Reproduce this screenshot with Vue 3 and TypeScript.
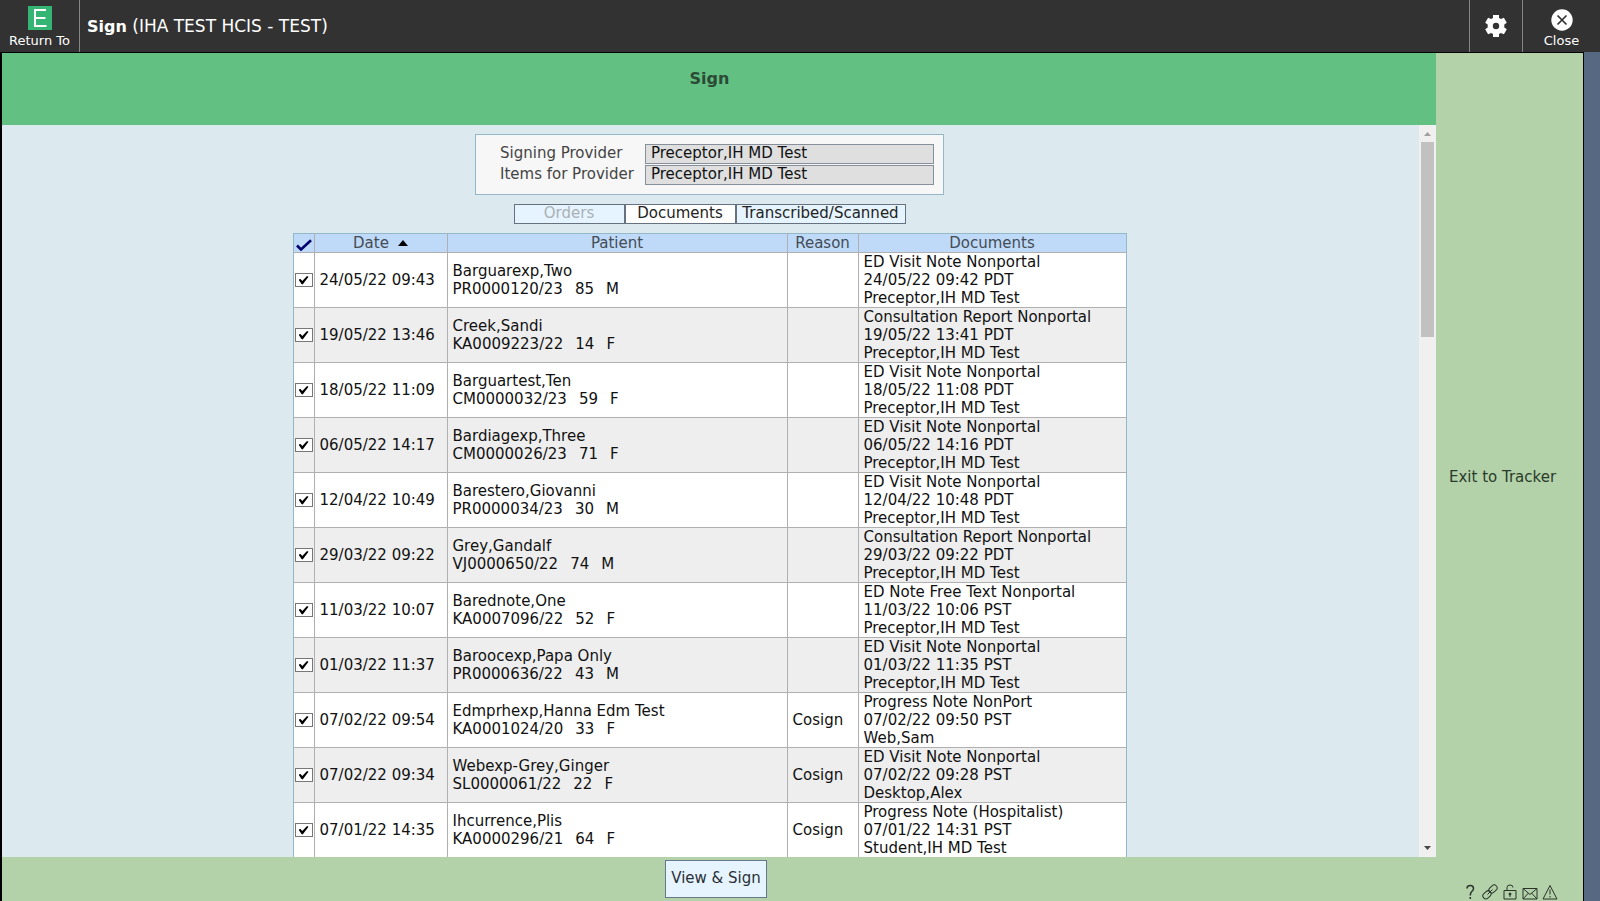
<script setup lang="ts">
import { ref } from 'vue'

interface Item {
  date: string
  name: string
  account: string
  age: number
  sex: string
  reason: string
  doc: [string, string, string]
  selected: boolean
}

const provider = 'Preceptor,IH MD Test'

function item(
  date: string, name: string, account: string, age: number, sex: string,
  title: string, time: string, author: string = provider, reason: string = '',
): Item {
  return { date, name, account, age, sex, reason, doc: [title, time, author], selected: true }
}

const items = ref<Item[]>([
  item('24/05/22 09:43', 'Barguarexp,Two', 'PR0000120/23', 85, 'M', 'ED Visit Note Nonportal', '24/05/22 09:42 PDT'),
  item('19/05/22 13:46', 'Creek,Sandi', 'KA0009223/22', 14, 'F', 'Consultation Report Nonportal', '19/05/22 13:41 PDT'),
  item('18/05/22 11:09', 'Barguartest,Ten', 'CM0000032/23', 59, 'F', 'ED Visit Note Nonportal', '18/05/22 11:08 PDT'),
  item('06/05/22 14:17', 'Bardiagexp,Three', 'CM0000026/23', 71, 'F', 'ED Visit Note Nonportal', '06/05/22 14:16 PDT'),
  item('12/04/22 10:49', 'Barestero,Giovanni', 'PR0000034/23', 30, 'M', 'ED Visit Note Nonportal', '12/04/22 10:48 PDT'),
  item('29/03/22 09:22', 'Grey,Gandalf', 'VJ0000650/22', 74, 'M', 'Consultation Report Nonportal', '29/03/22 09:22 PDT'),
  item('11/03/22 10:07', 'Barednote,One', 'KA0007096/22', 52, 'F', 'ED Note Free Text Nonportal', '11/03/22 10:06 PST'),
  item('01/03/22 11:37', 'Baroocexp,Papa Only', 'PR0000636/22', 43, 'M', 'ED Visit Note Nonportal', '01/03/22 11:35 PST'),
  item('07/02/22 09:54', 'Edmprhexp,Hanna Edm Test', 'KA0001024/20', 33, 'F', 'Progress Note NonPort', '07/02/22 09:50 PST', 'Web,Sam', 'Cosign'),
  item('07/02/22 09:34', 'Webexp-Grey,Ginger', 'SL0000061/22', 22, 'F', 'ED Visit Note Nonportal', '07/02/22 09:28 PST', 'Desktop,Alex', 'Cosign'),
  item('07/01/22 14:35', 'Ihcurrence,Plis', 'KA0000296/21', 64, 'F', 'Progress Note (Hospitalist)', '07/01/22 14:31 PST', 'Student,IH MD Test', 'Cosign'),
])

const tabs = [
  { label: 'Orders', disabled: true },
  { label: 'Documents', disabled: false },
  { label: 'Transcribed/Scanned', disabled: false },
]
const activeTab = ref('Documents')

function toggleAll(): void {
  const next = !items.value.every((i) => i.selected)
  items.value.forEach((i) => { i.selected = next })
}
</script>

<template>
  <div class="app">
    <header class="topbar">
      <button class="return" type="button">
        <svg class="logo" viewBox="0 0 24 24" aria-hidden="true">
          <rect width="24" height="24" fill="#34b573" />
          <path d="M18 4H7V20H18.500M7 12H17.500" fill="none" stroke="#fff" stroke-width="2" />
        </svg>
        <span>Return To</span>
      </button>
      <h1 class="title"><b>Sign</b> (IHA TEST HCIS - TEST)</h1>
      <button class="settings" type="button" aria-label="Settings">
        <svg viewBox="0 0 22 22" aria-hidden="true">
          <path
            fill="#fff" fill-rule="evenodd"
            d="M8 0h6v3l2 1.100 2.900-1.300 2.900 4.900-2.500 1.800v3l2.500 1.800-2.900 4.900L16 17.900 14 19v3H8v-3l-2-1.100-2.900 1.300-2.900-4.900 2.500-1.800v-3L.2 7.700l2.900-4.900L6 4.100 8 3zM11 7.800a3.200 3.200 0 1 0 0 6.400 3.200 3.200 0 0 0 0-6.400z"
          />
        </svg>
      </button>
      <button class="close" type="button">
        <svg viewBox="0 0 22 22" aria-hidden="true">
          <circle cx="11" cy="11" r="10.700" fill="#fff" />
          <path d="M6.500 6.500l9 9M15.500 6.500l-9 9" stroke="#323232" stroke-width="1.700" />
        </svg>
        <span>Close</span>
      </button>
    </header>

    <div class="body">
      <main class="main">
        <div class="banner"><h2>Sign</h2></div>

        <div class="viewport">
          <div class="content">
            <div class="providers">
              <label for="signing">Signing Provider</label>
              <input id="signing" type="text" readonly :value="provider" />
              <label for="itemsFor">Items for Provider</label>
              <input id="itemsFor" type="text" readonly :value="provider" />
            </div>

            <nav class="tabs">
              <button
                v-for="tab in tabs" :key="tab.label" type="button"
                :disabled="tab.disabled" :class="{ active: tab.label === activeTab }"
                @click="activeTab = tab.label"
              >{{ tab.label }}</button>
            </nav>

            <table class="items">
              <colgroup>
                <col class="c-tick" /><col class="c-date" /><col /><col class="c-reason" /><col class="c-doc" />
              </colgroup>
              <thead>
                <tr>
                  <th>
                    <button type="button" class="all" aria-label="Select all" @click="toggleAll">
                      <svg viewBox="0 0 16 12" aria-hidden="true">
                        <path d="M1 6.500l4 4L15 1.200" fill="none" stroke="#00006e" stroke-width="2.600" />
                      </svg>
                    </button>
                  </th>
                  <th>
                    <button type="button" class="sort">Date
                      <svg viewBox="0 0 10 6" aria-hidden="true"><path d="M5 0l5 6H0z" fill="#000" /></svg>
                    </button>
                  </th>
                  <th>Patient</th>
                  <th>Reason</th>
                  <th>Documents</th>
                </tr>
              </thead>
              <tbody>
                <tr v-for="row in items" :key="row.account">
                  <td class="tick"><input v-model="row.selected" type="checkbox" :aria-label="'Select ' + row.name" /></td>
                  <td>{{ row.date }}</td>
                  <td>
                    <div>{{ row.name }}</div>
                    <div class="ids"><span>{{ row.account }}</span><span>{{ row.age }}</span><span>{{ row.sex }}</span></div>
                  </td>
                  <td>{{ row.reason }}</td>
                  <td><div v-for="line in row.doc" :key="line">{{ line }}</div></td>
                </tr>
              </tbody>
            </table>
          </div>

          <div class="scrollbar" aria-hidden="true">
            <svg viewBox="0 0 17 17"><path d="M5 11h7L8.500 7z" fill="#a0a0a0" /></svg>
            <div class="track"><div class="thumb"></div></div>
            <svg viewBox="0 0 17 17"><path d="M5 6h7l-3.500 4z" fill="#484848" /></svg>
          </div>
        </div>

        <footer class="footer"><button type="button">View &amp; Sign</button></footer>
      </main>

      <aside class="side">
        <button class="exit" type="button">Exit to Tracker</button>
        <div class="tools">
          <button type="button" aria-label="Help">
            <svg viewBox="0 0 16 16"><path d="M5 4.500Q5 1.500 8.300 1.500q3.200 0 3.200 3 0 1.500-1.500 2.800Q8.300 8.800 8.300 11.500M8.300 13v2" stroke-width="1.500" /></svg>
          </button>
          <button type="button" aria-label="Link">
            <svg viewBox="0 0 16 16">
              <rect x="-4.500" y="-3" width="9" height="6" rx="3" transform="translate(5 10.800) rotate(-42)" />
              <rect x="-4.500" y="-3" width="9" height="6" rx="3" transform="translate(11 5) rotate(-42)" />
              <path d="M5.500 10.500l5-5" />
            </svg>
          </button>
          <button type="button" aria-label="Unlock">
            <svg viewBox="0 0 16 16"><path d="M2 6.500h12v8.500H2zM5 6.500V3.500Q5 1 8 1t3 2.500" /><circle cx="8" cy="10" r="1" fill="#2b332b" /><path d="M8 10v3" /></svg>
          </button>
          <button type="button" aria-label="Mail">
            <svg viewBox="0 0 16 16"><path d="M1 4.500h14V15H1zM1 4.500l7 6 7-6M1 15l5.500-6M15 15L9.500 9" /></svg>
          </button>
          <button type="button" aria-label="Alerts">
            <svg viewBox="0 0 16 16"><path d="M8 1.500L15 15H1zM8 5.500v5M8 12v1.500" /></svg>
          </button>
        </div>
      </aside>
    </div>
  </div>
</template>

<style>
body {
  margin: 0;
}
</style>

<style scoped>
.app {
  display: flex;
  flex-direction: column;
  height: 100vh;
  overflow: hidden;
  background: #576882;
  font: 15px/18px Verdana, "DejaVu Sans", sans-serif;
  color: #111;
}

button {
  margin: 0;
  padding: 0;
  border: 0;
  background: none;
  color: inherit;
  font: inherit;
  cursor: pointer;
}

svg {
  display: block;
}

.topbar {
  display: flex;
  flex: none;
  height: 52px;
  background: #323232;
  color: #fff;
}

.topbar button {
  display: flex;
  flex-direction: column;
  align-items: center;
  flex: none;
  box-sizing: border-box;
  font-size: 13px;
}

.return {
  width: 80px;
  padding-top: 6px;
  border-right: 1px solid #858585;
}

.topbar .logo {
  width: 24px;
  height: 24px;
  margin-bottom: 2px;
}

.title {
  flex: 1;
  margin: 0;
  padding-left: 7px;
  font-size: 17px;
  font-weight: normal;
  line-height: 52px;
}

.title b {
  font-size: 16px;
}

.settings,
.close {
  border-left: 1px solid #858585;
}

.settings {
  width: 53px;
  justify-content: center;
}

.close {
  width: 78px;
  padding-top: 9px;
}

.settings svg,
.close svg {
  width: 22px;
  height: 22px;
}

.close svg {
  margin-bottom: 1px;
}

.body {
  display: flex;
  flex: 1;
  min-height: 0;
  margin-right: 16px;
  border: solid #000;
  border-width: 1px 1px 0 2px;
  background: #b3d2a9;
}

.main {
  display: flex;
  flex: 1;
  flex-direction: column;
  min-width: 0;
}

.banner {
  flex: none;
  height: 72px;
  padding-right: 19px;
  background: #62c182;
  text-align: center;
}

.banner h2 {
  margin: 0;
  padding-top: 16px;
  font-size: 16px;
  line-height: 20px;
  color: #2c4a36;
}

.viewport {
  display: flex;
  flex: 1;
  min-height: 0;
  background: #dce9ef;
}

.content {
  display: flex;
  flex: 1;
  flex-direction: column;
  align-items: center;
  gap: 9px;
  overflow: hidden;
  padding: 9px 2px 0 0;
}

.providers {
  display: grid;
  flex: none;
  grid-template-columns: 145px 289px;
  grid-auto-rows: 20px;
  row-gap: 1px;
  padding: 9px 9px 9px 24px;
  border: 1px solid #93b8c8;
  background: #f7f7f7;
  color: #444;
}

.providers input {
  box-sizing: border-box;
  width: 100%;
  height: 20px;
  padding: 0 5px 2px;
  border: 1px solid #87909a;
  border-radius: 0;
  outline: 0;
  background: #dfdfdf;
  color: #111;
  font: inherit;
}

.tabs {
  display: grid;
  flex: none;
  grid-template-columns: 111px 111px 170px;
}

.tabs button {
  height: 20px;
  padding-bottom: 1px;
  border: 1px solid #66727f;
  background: #e6f4ff;
  color: #222;
  line-height: 17px;
}

.tabs button:disabled {
  color: #a9b0b5;
}

.tabs button.active {
  background: #fff;
}

.items {
  flex: none;
  width: 834px;
  max-width: 100%;
  border-collapse: collapse;
  table-layout: fixed;
  border: 1px solid #93b8c8;
  background: #fff;
}

.c-tick { width: 21px; }
.c-date { width: 133px; }
.c-reason { width: 71px; }
.c-doc { width: 268px; }

.items th {
  height: 18px;
  padding: 0;
  border: 1px solid #b0b0b0;
  border-top-color: #93b8c8;
  background: #bfdaf8;
  color: #444c56;
  font-weight: normal;
}

.items th button {
  display: flex;
  align-items: center;
  justify-content: center;
  width: 100%;
  height: 18px;
}

.all svg {
  width: 16px;
  height: 12px;
  margin-top: 3px;
}

.sort {
  gap: 9px;
}

.sort svg {
  width: 10px;
  height: 6px;
}

.items td {
  height: 54px;
  padding: 0 5px;
  border: 1px solid #b0b0b0;
  white-space: nowrap;
}

.items th:first-child,
.items td:first-child {
  border-left-color: #93b8c8;
}

.items th:last-child,
.items td:last-child {
  border-right-color: #93b8c8;
}

.items tbody tr:nth-child(even) {
  background: #eee;
}

.items .tick {
  padding: 0 1px;
}

.tick input {
  display: grid;
  place-items: center;
  appearance: none;
  box-sizing: border-box;
  width: 18px;
  height: 14px;
  margin: 0;
  border: 1px solid #777;
  background: #fff;
}

.tick input:checked::before {
  content: "";
  width: 10px;
  height: 9px;
  background: #000;
  clip-path: polygon(0 45%, 20% 40%, 38% 62%, 85% 5%, 100% 15%, 42% 100%, 30% 95%);
}

.ids {
  display: flex;
  gap: 12px;
}

.scrollbar {
  display: flex;
  flex: none;
  flex-direction: column;
  width: 17px;
  background: #f0f0f0;
}

.track {
  flex: 1;
  padding: 0 2px;
}

.thumb {
  height: 28%;
  background: #c1c1c1;
}

.footer {
  flex: none;
  padding: 3px 6px 3px 0;
  text-align: center;
}

.footer button {
  height: 38px;
  padding: 0 5px 2px;
  border: 1px solid #66788a;
  background: #e6f4ff;
  color: #2a3036;
  vertical-align: top;
}

.side {
  display: grid;
  flex: none;
  grid-template-rows: 1fr auto 1fr;
  width: 147px;
}

.exit {
  grid-row: 2;
  justify-self: start;
  padding-left: 13px;
  color: #2b3a2b;
}

.tools {
  display: flex;
  grid-row: 3;
  align-self: end;
  justify-content: flex-end;
  gap: 4px;
  padding: 0 25px 1px 0;
}

.tools svg {
  width: 16px;
  height: 16px;
  fill: none;
  stroke: #2b332b;
}
</style>
